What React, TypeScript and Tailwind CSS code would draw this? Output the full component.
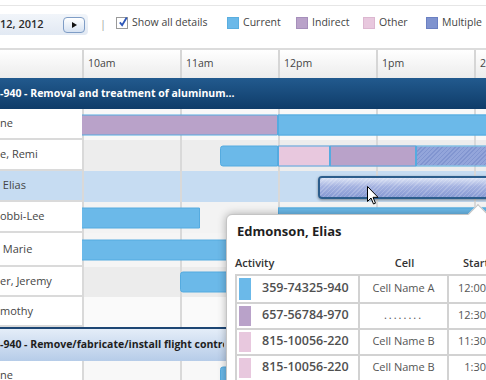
import type { ReactNode } from 'react';

type Kind = 'current' | 'indirect' | 'other' | 'multiple';

const hours = ['10am', '11am', '12pm', '1pm', '2pm'];

const kindClass: Record<Kind, string> = {
  current: 'bg-[#6bb9e9]',
  indirect: 'bg-[#b9a2c9]',
  other: 'bg-[#e8c8de]',
  multiple:
    'bg-[repeating-linear-gradient(135deg,#8195d0_0px,#8195d0_1px,#93a5da_1px,#93a5da_3px)]',
};

interface Bar {
  from: number;
  to: number;
  kind: Kind;
}

interface Row {
  name: string;
  bg: string;
  h: string;
  selected?: boolean;
  bars: Bar[];
}

const rows: Row[] = [
  { name: 'ne', h: 'h-[31px]', bg: 'bg-[#f8f8f8]', bars: [{ from: -4, to: 196, kind: 'indirect' }, { from: 196, to: 420, kind: 'current' }] },
  {
    name: 'e, Remi',
    h: 'h-[31px]',
    bg: 'bg-[#ededed]',
    bars: [
      { from: 138, to: 196, kind: 'current' },
      { from: 196, to: 248, kind: 'other' },
      { from: 248, to: 334, kind: 'indirect' },
      { from: 334, to: 420, kind: 'multiple' },
    ],
  },
  { name: ' Elias', h: 'h-[31px]', bg: 'bg-[#c6dcf2]', selected: true, bars: [] },
  { name: 'obbi-Lee', h: 'h-[31px]', bg: 'bg-[#f3f3f3]', bars: [{ from: -4, to: 118, kind: 'current' }, { from: 196, to: 420, kind: 'current' }] },
  { name: ' Marie', h: 'h-[34px]', bg: 'bg-[#f5f5f5]', bars: [{ from: -4, to: 420, kind: 'current' }] },
  { name: 'er, Jeremy', h: 'h-[30px]', bg: 'bg-[#ececec]', bars: [{ from: 98, to: 420, kind: 'current' }] },
  { name: 'mothy', h: 'h-[30px]', bg: 'bg-[#fafafa]', bars: [] },
];

const legend: { label: string; swatch: string; w: string }[] = [
  { label: 'Current', swatch: 'bg-[#6bb9e9] border-[#5aaedf]', w: 'w-[69px]' },
  { label: 'Indirect', swatch: 'bg-[#b9a2c9] border-[#a68fbb]', w: 'w-[67px]' },
  { label: 'Other', swatch: 'bg-[#e8c8de] border-[#dcb7d0]', w: 'w-[63px]' },
  { label: 'Multiple', swatch: 'bg-[#7f93cf] border-[#6b80c2]', w: 'w-[60px]' },
];

const activities: { id: string; cell: string; start: string; swatch: string }[] = [
  { id: '359-74325-940', cell: 'Cell Name A', start: '12:00pm', swatch: 'bg-[#6bb9e9]' },
  { id: '657-56784-970', cell: '........', start: '12:30pm', swatch: 'bg-[#b9a2c9]' },
  { id: '815-10056-220', cell: 'Cell Name B', start: '11:30pm', swatch: 'bg-[#e8c8de]' },
  { id: '815-10056-220', cell: 'Cell Name B', start: '1:30pm', swatch: 'bg-[#e8c8de]' },
];

function HourGrid() {
  return (
    <div className="absolute inset-0 flex">
      {hours.map((h) => (
        <div key={h} className="w-[98px] shrink-0 border-l-2 border-[#d9d9d9]" />
      ))}
    </div>
  );
}

function GanttRow({ row }: { row: Row }) {
  return (
    <div className={`flex ${row.h}`}>
      <div
        className={`w-[82px] shrink-0 flex items-center whitespace-pre border-b-2 border-[#dadada] text-[11px] text-[#454545] ${
          row.selected ? 'bg-[#c6dcf2]' : 'bg-white'
        }`}
      >
        {row.name}
      </div>
      <div className={`relative flex-1 overflow-hidden ${row.bg}`}>
        <HourGrid />
        {row.bars.map((b, i) => (
          <div
            key={i}
            className={`absolute top-1/2 -translate-y-1/2 h-[21px] border border-[#55abe0] ${kindClass[b.kind]} ${i === 0 ? 'rounded-l-[3px]' : ''}`}
            style={{ left: b.from, width: b.to - b.from }}
          />
        ))}
        {row.selected && (
          <div className="absolute left-[236px] top-[5px] w-[190px] h-[23px] rounded-[4px] border-2 border-[#2c5d8c] shadow-[0_1px_3px_rgba(0,0,0,0.4)] bg-[linear-gradient(to_bottom,#dce3f5,#a4b2e0_45%,#8699d3)]">
            <div className="h-full w-full bg-[repeating-linear-gradient(135deg,rgba(255,255,255,0.18)_0px,rgba(255,255,255,0.18)_1px,transparent_1px,transparent_3px)]" />
          </div>
        )}
      </div>
    </div>
  );
}

function GroupHeader({ children, dark }: { children: ReactNode; dark?: boolean }) {
  return (
    <div
      className={`flex items-center whitespace-nowrap font-bold text-[10.5px] ${
        dark
          ? 'h-[31px] bg-[linear-gradient(to_bottom,#225a8e,#0f3c69)] text-white'
          : 'h-[34px] border-t-2 border-[#1d4674] bg-[linear-gradient(to_bottom,#e4edf8,#b6cce8)] text-[#1e1e1e]'
      }`}
    >
      {children}
    </div>
  );
}

function Popup() {
  return (
    <div className="absolute left-[226px] top-[214px] w-[300px] h-[200px] bg-white rounded-tl-[6px] border border-[#c4c4c4] shadow-[0_0_8px_rgba(0,0,0,0.3)]">
      <div className="absolute -top-[8px] left-[244px] w-[14px] h-[14px] rotate-45 bg-white border-l border-t border-[#c4c4c4]" />
      <div className="relative pl-[10px] pt-[7px] text-[13px] font-bold text-[#1f1f1f]">Edmonson, Elias</div>
      <div className="relative ml-[8px] mt-[13px]">
        <div className="grid grid-cols-[125px_89px_70px] text-[11px] font-semibold text-[#333] h-[16px] items-center">
          <div>Activity</div>
          <div className="text-center">Cell</div>
          <div className="pl-[14px]">Start</div>
        </div>
        <div className="mt-[3px] border-2 border-[#d2d2d2]">
          {activities.map((a, i) => (
            <div
              key={i}
              className={`grid grid-cols-[123px_89px_70px] h-[26px] ${i > 0 ? 'border-t-2 border-[#d2d2d2]' : ''}`}
            >
              <div className="flex items-stretch py-[2px] pl-[2px] border-r-2 border-[#d2d2d2]">
                <div className={`w-[12px] shrink-0 ${a.swatch}`} />
                <span className="ml-[11px] self-center whitespace-nowrap text-[12.5px] font-semibold text-[#505050]">{a.id}</span>
              </div>
              <div className="flex items-center justify-center border-r-2 border-[#d2d2d2] text-[11px] text-[#555] whitespace-nowrap">
                {a.cell === '........' ? <span className="tracking-[2px]">{a.cell}</span> : a.cell}
              </div>
              <div className="flex items-center justify-end pr-[16px] text-[11px] text-[#555] whitespace-nowrap">{a.start}</div>
            </div>
          ))}
        </div>
      </div>
    </div>
  );
}

export default function App() {
  return (
    <div className="relative w-[486px] h-[380px] overflow-hidden bg-white font-['Open_Sans',sans-serif]">
      {/* toolbar */}
      <div className="h-[45px] mt-[5px] border-t border-[#e6e6e6] border-b-2 border-b-[#dcdcdc] flex items-start pt-[8px] whitespace-nowrap">
        <div className="flex items-center shrink-0 w-[88px] h-[21px] rounded-r-[4px] bg-[linear-gradient(to_bottom,#f1f5fa,#e2e9f3)]">
          <span className="text-[11px] font-semibold text-[#2c2c2c]">12, 2012</span>
          <button className="ml-auto mr-[3px] w-[22px] h-[16px] rounded-[4px] border border-[#7f9dc6] bg-[linear-gradient(to_bottom,#ffffff,#d6e2f2)] flex items-center justify-center">
            <span className="block w-0 h-0 border-y-[3.5px] border-y-transparent border-l-[5px] border-l-[#111]" />
          </button>
        </div>
        <span className="ml-[12px] mt-[2px] text-[11px] text-[#a0a0a0]">|</span>
        <div className="ml-[10px] mt-[1px] w-[111px] flex items-center gap-[4px] shrink-0">
          <div className="relative w-[12px] h-[12px] border border-[#9a9a9a] bg-white">
            <svg viewBox="0 0 12 12" className="absolute -top-[2px] left-[1px] w-[11px] h-[12px]">
              <path d="M2 6.5 L4.5 9.5 L9.5 1" fill="none" stroke="#2f58b8" strokeWidth="2" />
            </svg>
          </div>
          <span className="text-[10.5px] text-[#444]">Show all details</span>
        </div>
        <div className="flex items-center shrink-0">
          {legend.map((l) => (
            <div key={l.label} className={`flex items-center mt-[1px] shrink-0 ${l.w}`}>
              <div className={`w-[12px] h-[12px] border ${l.swatch}`} />
              <span className="ml-[4px] text-[10.5px] text-[#444]">{l.label}</span>
            </div>
          ))}
        </div>
      </div>

      {/* time header */}
      <div className="flex h-[28px] bg-[linear-gradient(to_bottom,#ffffff,#ececec)]">
        <div className="w-[82px] shrink-0" />
        {hours.map((h) => (
          <div key={h} className="w-[98px] shrink-0 border-l-2 border-[#d6d6d6] pl-[4px] flex items-center text-[10.5px] text-[#444]">
            {h}
          </div>
        ))}
      </div>

      <GroupHeader dark>-940 - Removal and treatment of aluminum...</GroupHeader>
      {rows.map((r) => (
        <GanttRow key={r.name} row={r} />
      ))}
      <GroupHeader>
        <span className="block w-[224px] overflow-hidden">-940 - Remove/fabricate/install flight control surfaces</span>
      </GroupHeader>
      <GanttRow row={{ name: 'ne', h: 'h-[31px]', bg: 'bg-[#f8f8f8]', bars: [{ from: 138, to: 420, kind: 'current' }] }} />

      <Popup />

      {/* mouse pointer */}
      <svg viewBox="0 0 12 19" className="absolute left-[367px] top-[186px] w-[12px] h-[19px]">
        <path d="M0.5 0.5 L0.5 15.5 L4 12 L6.5 18 L8.5 17.2 L6 11.3 L11 11.3 Z" fill="#fff" stroke="#000" strokeWidth="1" />
      </svg>
    </div>
  );
}
